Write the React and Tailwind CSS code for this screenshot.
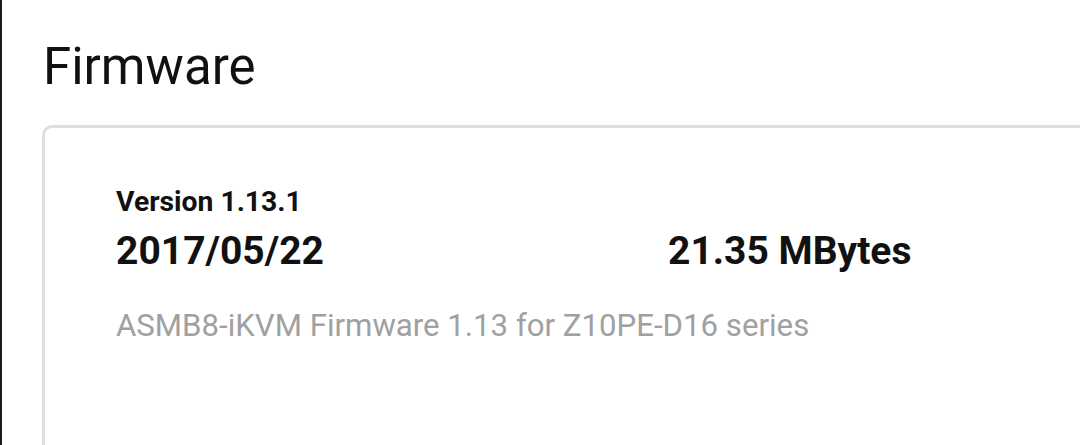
import React from 'react';

const App = () => {
  return (
    <div
      className="h-[445px] w-[1080px] overflow-hidden bg-white border-l-2 border-[#1a1a1a] flex flex-col"
      style={{ fontFamily: 'Roboto, "Noto Sans", sans-serif' }}
    >
      {/* Title */}
      <h1 className="ml-[41px] mt-[39px] text-[51px] leading-[56px] font-normal text-[#111]">
        Firmware
      </h1>

      {/* Card */}
      <div className="ml-[40px] mt-[30px] w-[1100px] h-[400px] shrink-0 border-[3px] border-[#dedede] rounded-[10px] pl-[71px] pt-[58px]">
        <div className="text-[28.3px] leading-[32px] font-bold text-[#111]">Version 1.13.1</div>
        <div className="flex mt-[11px] text-[39px] leading-[44px] font-bold text-[#111]">
          <div className="w-[552px]">2017/05/22</div>
          <div>21.35 MBytes</div>
        </div>
        <p className="mt-[35px] text-[31.2px] leading-[36px] text-[#a0a0a0]">
          ASMB8-iKVM Firmware 1.13 for Z10PE-D16 series
        </p>
      </div>
    </div>
  );
};

export default App;
